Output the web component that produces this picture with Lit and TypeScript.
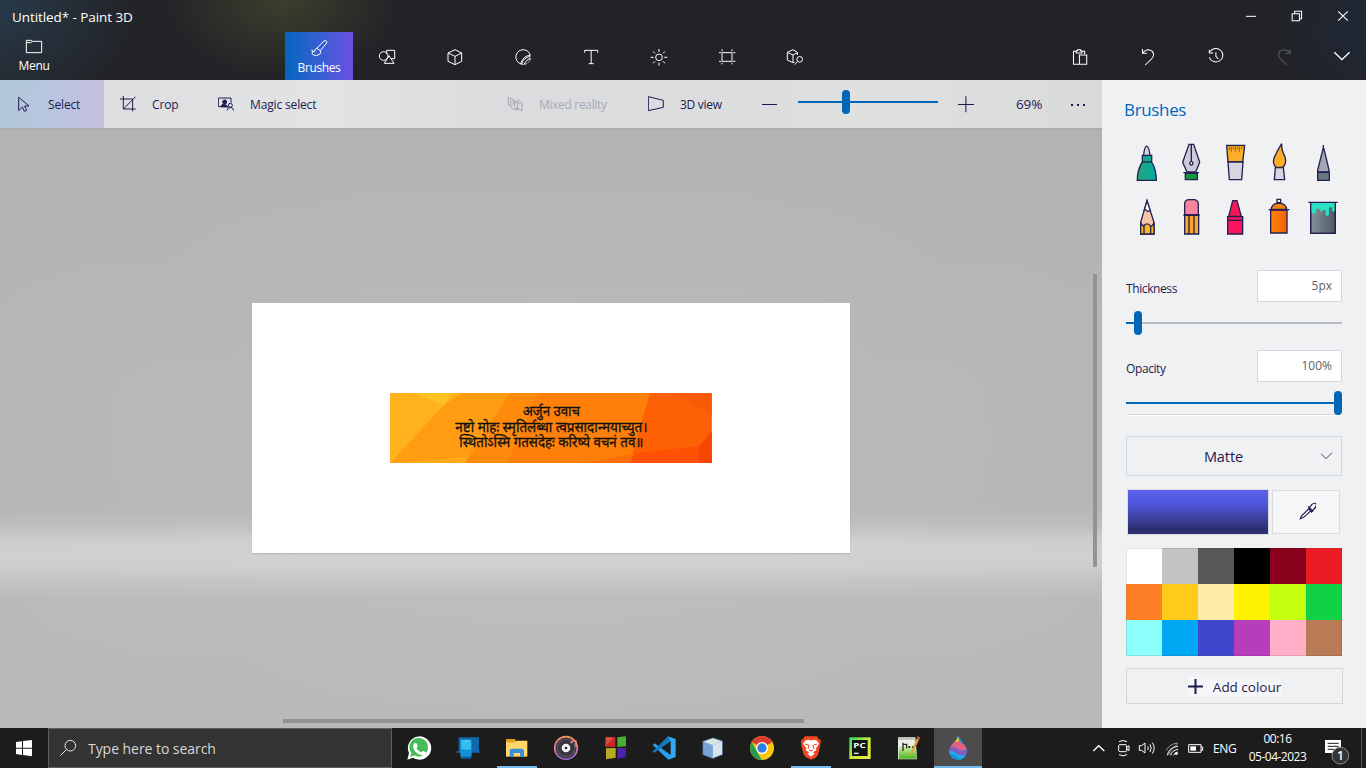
import { LitElement, html, svg, css } from "lit";
import { customElement } from "lit/decorators.js";
import { styleMap } from "lit/directives/style-map.js";

// Icon artwork is drawn on a grid of three units per pixel.
const art = (x: number, y: number, w: number, h: number, body: unknown, cls = "") => html`
  <svg class=${cls} width=${w} height=${h} viewBox="${x} ${y} ${w * 3} ${h * 3}">${body}</svg>`;

// Right-hand controls use a slightly narrower horizontal grid.
const wide = (body: unknown) => svg`<g transform="scale(1.0446 1)">${body}</g>`;

const tools = [
  svg`<circle cx="101" cy="78" r="13"/><path d="M110 72V61H134V86H124M103 100H132L117 77Z"/>`,
  svg`<path d="M315 59L335 69V94L315 104L294 94V69ZM294 69L315 79L335 69M315 79V104"/>`,
  svg`<path d="M521 103A22 22 0 1 1 541 76Q520 76 512 102M515 101Q519 84 541 79M522 103Q527 90 542 84"/><path d="M524 103Q537 100 542 85" stroke-dasharray="6 4"/>`,
  svg`<path d="M704 68V61H743V68M723.5 61V101M716 101H731"/>`,
  svg`<circle cx="927" cy="82" r="10"/><path d="M927 57V66M927 98V107M902 82H911M943 82H952M909 64L915 70M939 94L945 100M945 64L939 70M915 94L909 100"/>`,
  svg`<path d="M1116 68H1146V94H1116ZM1107 68H1113M1149 68H1156M1107 94H1113M1149 94H1156M1116 58V64M1146 58V64M1116 98V103M1146 98V103"/>`,
  svg`<path d="M1342 75V67L1329 59L1312 67V90L1329 98L1334 96M1312 67L1329 75L1342 68M1329 75V98M1334 104L1342 95"/><circle cx="1349" cy="88" r="8.5"/>`,
];

const actions = [
  svg`<path d="M744 193H728V154H736M750 154H760V162M736 159V152H740V149H748V152H752V159ZM745 165H766V193H745Z"/>`,
  svg`<path d="M926 147V160H939M926 160Q933 149 944 149Q958 151 958 165Q957 171 952 177L934 195"/>`,
  svg`<path d="M1120 155A20 20 0 1 1 1118 172M1118 149V159H1129M1137 157V169L1144 177"/>`,
  svg`<path d="M1350 147V160H1337M1350 160Q1343 149 1332 149Q1317 151 1317 165Q1318 171 1323 177L1341 195"/>`,
];

const brushes = [
  svg`<path d="M131 75Q133 51 140 48Q147 51 150 75" fill="#d6d5df"/><path d="M127 76H155V96Q169 118 169 151H112Q112 118 127 96Z" fill="url(#teal)"/><path d="M127 96H155"/>`,
  svg`<path d="M267 43H281L299 97L287 126H261L248 97Z" fill="#cbcbda"/><path d="M274 44V94M250 128H297"/><circle cx="274" cy="100" r="5" fill="#fff"/><path d="M256 130H292V149H256Z" fill="#109a40"/>`,
  svg`<path d="M380 46H434L428 96H384Z" fill="#fbae27"/><path d="M384 96H429L425 149H388Z" fill="#d7d6e0"/><path d="M388 49V60M394 49V66M400 49V58M406 49V65M412 49V60M418 49V67M425 49V58" stroke-width="1.6"/>`,
  svg`<path d="M545 41Q544 62 555 80Q561 102 548 112H528Q517 102 522 84Q530 66 545 41Z" fill="#fbae27"/><path d="M526 113H550L554 149H523Z" fill="#d7d6e0"/>`,
  svg`<path d="M669 57H672L687 120V126H653V120Z" fill="#a5a6b4"/><path d="M670 45V59"/><path d="M653 127H688V151H653Z" fill="#697683"/>`,
  svg`<path d="M141 212L162 277V312H122V277Z" fill="#f6c5a8"/><path d="M141 212L133 240Q138 237 142 244L151 242Z" fill="#fff"/><path d="M122 312V278Q129 292 134 285Q142 278 149 286Q156 293 162 278V312Z" fill="#fbb81f"/><path d="M132 288V312M152 288V312"/>`,
  svg`<path d="M254 255V221Q255 209 267 209H283Q295 211 295 222V255Z" fill="#f5869e"/><path d="M254 256H296V312H254Z" fill="#fba72b"/><path d="M267 256V312M282 256V312M250 255H299"/>`,
  svg`<path d="M398 212H411L424 259H386Z" fill="#f51858"/><path d="M383 260H428V312H383Z" fill="#fb155e"/><path d="M384 271H428"/>`,
  svg`<path d="M513 238Q516 223 530 220H543Q558 223 560 238Z" fill="#f68212"/><path d="M531 208H542V218H531Z" fill="#f0f1f3"/><path d="M512 240H561V309H512Z" fill="url(#orange)"/><path d="M506 239H568"/>`,
  svg`<path d="M632 218H706V310H632Z" fill="url(#slate)"/><path d="M633 218H705V242Q700 248 696 242V235Q691 228 687 234V254Q682 262 677 254V242Q672 236 668 242Q664 250 660 240Q655 233 651 237Q647 242 647 249Q641 254 636 248L633 244Z" fill="#2be0c2" stroke="none"/><path d="M632 218V310H706V218M625 217H713"/>`,
];

const apps = [
  svg`<path d="M52 104L57 84A35 35 0 1 1 69 98Z" fill="#fff"/><path d="M60 97L64 84A28 28 0 1 1 72 91Z" fill="#43bd55"/><path d="M75 53Q81 52 83 65L79 70Q85 79 94 82L99 77L108 82Q107 92 98 92Q72 87 69 64Q70 55 75 53Z" fill="#fff"/>`,
  svg`<path d="M206 37H267V79H270V83H199V79H206Z" fill="#1266aa"/><path d="M212 44H244V95H212Z" fill="#30bdee"/><path d="M212 74H244V93H212Z" fill="#1590d7"/><path d="M213 95H243V101H213Z" fill="#0864ad"/><path d="M225 48H234" stroke="#d3f5ff" stroke-width="2"/>`,
  svg`<path d="M348 42H374L379 48H411V95H348Z" fill="#dda018"/><path d="M348 52H376L380 47H412V94H348Z" fill="#ffd667"/><path d="M359 96V76Q359 71 365 71H397Q402 72 402 77V96H390V84H371V96Z" fill="#398fdc"/>`,
  svg`<circle cx="528" cy="69" r="34" fill="#383541" stroke="url(#groove)" stroke-width="5"/><circle cx="528" cy="69" r="26" stroke="#57515c" stroke-width="4"/><circle cx="528" cy="69" r="13" fill="#f4f4f4"/><circle cx="528" cy="69" r="4" fill="#232327"/><path d="M542 54Q550 43 558 49V66" stroke="#f08172" stroke-width="5"/>`,
  svg`<path d="M646 35L676 37V66L645 65Z" fill="#cf2721"/><path d="M682 37L708 34V64L682 66Z" fill="#49ae31"/><path d="M648 70L677 69V98L648 103Z" fill="#b5ae22"/><path d="M682 69H708L706 97L682 101Z" fill="#4e22ad"/><path d="M648 37L673 38L649 59Z" fill="#ed7770" opacity=".5"/>`,
  svg`<path d="M788 60L794 55L843 91L835 104Z" fill="#28a2ec"/><path d="M787 80L834 34L843 48L793 83Z" fill="#147ac0"/><path d="M834 34L857 42V96L835 104L842 88V49Z" fill="#30a9f2"/>`,
  svg`<path d="M69 38L98 48V89L68 101L38 89V49Z" fill="#9ebbd9"/><path d="M39 49L69 39L98 48L69 60Z" fill="#d6e6df"/><path d="M39 50L68 61V100L39 88Z" fill="#77a2d4"/><path d="M69 61L97 50V88L69 99Z" fill="#d7e4ed"/><path d="M69 38L98 48V89L68 101L38 89V49Z" stroke="#293d65" stroke-width="2"/>`,
  svg`<circle cx="216" cy="69" r="36" fill="#fbc713"/><path d="M216 69L185 51A36 36 0 0 1 247 51Z" fill="#de3b30"/><path d="M185 51L203 83L215 105A36 36 0 0 1 185 51Z" fill="#229b51"/><circle cx="216" cy="69" r="18" fill="#fff"/><circle cx="216" cy="69" r="14" fill="#317ee2"/>`,
  svg`<path d="M344 34H381L386 42L393 46L391 59L384 91L376 99L363 104L348 97L341 89L333 58V46L340 41Z" fill="#f24521"/><path d="M347 46L358 44L363 47L369 44L379 46L387 56L378 70L379 76L369 82L374 86L363 95L352 86L358 82L347 76L349 70L339 56Z" fill="#fff"/><path d="M345 57L357 61L354 72M381 57L369 61L372 72M357 75L363 78L369 75" stroke="#f24521" stroke-width="3"/>`,
  svg`<rect x="478" y="37" width="64" height="65" fill="url(#pyc)"/><rect x="486" y="45" width="47" height="48" fill="#101611"/><text x="490" y="68" font-size="22" font-weight="700" fill="#fff" textLength="37" lengthAdjust="spacingAndGlyphs">PC</text><path d="M492 85H506" stroke="#e5e5e5" stroke-width="4"/>`,
  svg`<path d="M624 37H676L681 103H624Z" fill="#edf0e7"/><path d="M626 65L678 60L680 101H626Z" fill="url(#npp)"/><path d="M626 42H675" stroke="#768774" stroke-width="5" stroke-dasharray="3 3"/><path d="M639 53V78M639 58H650V70M655 66H661M666 66H672M658 63V69" stroke="#252b22" stroke-width="4"/><path d="M659 92L663 80L683 34L690 38L668 84Z" fill="#e4a238"/><path d="M683 34L690 38L687 45L680 41Z" fill="#b6503e"/>`,
  svg`<path d="M805 33Q815 47 821 57Q832 67 831 80Q827 104 803 105Q781 104 777 82Q776 69 791 54Q799 46 805 33Z" fill="#218ed8"/><path d="M804 33L808 54L826 63Q813 60 800 58L790 55Q801 47 804 33Z" fill="#fec716"/><path d="M791 53Q799 47 812 52Q825 58 830 73Q817 82 803 71Q791 64 780 68Q783 60 791 53Z" fill="#e65f85"/><path d="M780 67Q794 62 803 72Q818 82 831 74Q832 85 827 89Q811 94 799 84Q789 77 777 78Z" fill="#845dc1"/><path d="M777 78Q789 77 799 85Q810 94 827 89Q818 102 806 104Q804 91 777 85Z" fill="#20abe5"/>`,
];

const tray = [
  svg`<path d="M40 78L56 62L73 78" stroke-width="4"/>`,
  svg`<path d="M119 59H138Q140 60 140 62V78Q139 80 137 80H120Q116 79 116 77V62Q116 59 119 59ZM140 67L147 62V77L140 72ZM117 50Q129 43 141 50M117 89Q129 96 141 89"/>`,
  svg`<path d="M178 62H185L195 54V84L185 76H178ZM203 64Q207 69 203 75M210 58Q217 69 210 81M217 53Q228 69 217 86"/>`,
  svg`<path d="M266 90Q270 75 294 55M258 77Q268 57 293 54" opacity=".55"/><path d="M262 91Q266 67 294 64M272 91Q275 76 294 73M281 91Q283 83 294 81"/><circle cx="289" cy="86" r="4" fill="#fff" stroke="none"/>`,
  svg`<path d="M326 59H363V82H326ZM363 66H368V76H363"/><path d="M331 64H348V77H331Z" fill="#fff" stroke="none"/>`,
];

const palette = [
  "#ffffff", "#c3c3c3", "#585858", "#000000", "#88001b", "#ec1c24",
  "#ff7f27", "#ffca18", "#fdeca6", "#fff200", "#c4ff0e", "#10d245",
  "#8cfffb", "#00a8f3", "#3f48cc", "#b83dba", "#ffaec8", "#b97a56",
];

@customElement("app-root")
export class AppRoot extends LitElement {
  static styles = css`
    * { box-sizing: border-box; }
    :host { display: flex; flex-direction: column; width: 1366px; height: 768px; overflow: hidden; font-family: "Open Sans", "Noto Sans", sans-serif; font-size: 12px; color: #1f1b50; }
    svg { display: block; flex: none; fill: none; }
    span { white-space: nowrap; }
    .head { height: 80px; color: #fff; background:
      radial-gradient(ellipse 150px 100px at 282px 0, rgba(76,76,48,.65), transparent 80%),
      radial-gradient(ellipse 140px 110px at 0 10px, rgba(42,62,80,.8), transparent),
      radial-gradient(ellipse 100px 100px at 1366px 30px, rgba(30,40,56,.8), transparent), #222327; }
    .line { stroke: #fff; stroke-width: 3; }
    .title { height: 32px; display: flex; align-items: center; padding-left: 12px; }
    .title span { flex: 1; font-size: 13.5px; letter-spacing: -.08px; padding-top: 2px; }
    .ribbon { height: 48px; display: flex; }
    .menu { width: 285px; }
    .cap { width: 68px; display: flex; flex-direction: column; align-items: center; font-size: 12px; line-height: 16px; }
    .brush { width: 68px; background: linear-gradient(90deg, #0466bd, #2c61ce 40%, #6a50e4); }
    .brush .cap { padding-top: 4px; letter-spacing: -.4px; }
    .menu .cap { padding-top: 2px; letter-spacing: -.25px; }
    .grow { flex: 1; }
    .dim { opacity: .25; }
    .main { height: 648px; display: flex; }
    .stage { width: 1102px; display: flex; flex-direction: column; }
    .bar { height: 48px; display: flex; align-items: center; background: linear-gradient(90deg, #dcddde, #e1e3e4 30%, #dadcdd 45%, #dcddde 70%, #dfe1e0 78%, #d9dbda); }
    .item { height: 48px; display: flex; align-items: center; padding-left: 16px; gap: 16px; width: 98px; letter-spacing: -.15px; }
    .item svg { stroke: #1f1b50; stroke-width: 3; }
    .item span { padding-top: 1px; }
    .item.select { width: 104px; background: linear-gradient(100deg, #afc8d6, #b9c5df 50%, #c7bfe0); }
    .item.magic { width: 289px; }
    .item.mixed { width: 141px; opacity: .28; letter-spacing: -.33px; }
    .item.view { width: 114px; letter-spacing: -.3px; }
    .ink { stroke: #1f1b50; stroke-width: 3; }
    .zoomline { margin: 0 4px; width: 140px; height: 24px; position: relative; top: -2px; display: flex; align-items: center; }
    .rail { height: 2px; width: 100%; background: #0066b8; }
    .thumb { position: absolute; width: 8px; height: 24px; border-radius: 4px; background: #0066b8; top: 0; }
    .zoomline .thumb { left: 44px; }
    .pct { width: 63px; padding-left: 25px; border: solid rgba(205,208,222,.35); border-width: 0 1px; height: 48px; line-height: 49px; font-size: 13.5px; letter-spacing: -.1px; }
    .dots { width: 49px; display: flex; justify-content: center; gap: 4px; padding-top: 1px; }
    .dots i { width: 2px; height: 2px; background: #1f1b50; }
    .space { position: relative; height: 600px; padding-top: 175px; display: flex; justify-content: center; align-items: flex-start;
      background: radial-gradient(ellipse 650px 420px at 551px 310px, rgba(255,255,255,.07), transparent),
      linear-gradient(#a9a9a9, #b2b4b3 3px, #b2b4b3 40px, #b5b7b6 250px, #b5b7b6 380px, #bcbebd 397px, #cbcdcc 411px, #cfd1d0 425px, #cdcfce 438px, #c3c5c4 452px, #b9bbba 472px, #b7b9b8 600px); }
    .sheet { width: 598px; height: 250px; background: #fff; display: flex; justify-content: center; align-items: center; box-shadow: 0 1px 1px rgba(110,120,120,.25); }
    .vbar { position: absolute; left: 1093px; top: 146px; width: 4px; height: 293px; background: #929393; }
    .hbar { position: absolute; left: 283px; top: 591px; width: 521px; height: 4px; background: #929393; }
    .verse { font-family: "Noto Sans Devanagari", "Noto Sans", "Lohit Devanagari", sans-serif; font-size: 41px; fill: #111; stroke: #111; stroke-width: .9; text-anchor: middle; }
    .panel { width: 264px; background: #f0f1f3; padding: 0 24px; }
    .panel h1 { margin: 0 0 0 -2px; height: 60px; padding-top: 18px; line-height: 24px; font-weight: 400; font-size: 17px; letter-spacing: -.35px; color: #0067bd; }
    .grid { display: grid; grid-template-columns: repeat(5, 44px); row-gap: 11px; width: 220px; margin-left: -1px; stroke: #252052; stroke-width: 4; }
    .setting { display: flex; justify-content: space-between; height: 32px; }
    .setting.first { margin-top: 31px; }
    .setting label { padding-top: 10px; line-height: 18px; letter-spacing: -.4px; }
    .field { width: 85px; height: 32px; border: 1px solid #d2d7e1; background: #fff; color: #616161; text-align: right; padding-right: 9px; line-height: 30px; font-size: 12px; }
    .range { height: 24px; margin: 9px 0 15px; position: relative; display: flex; align-items: center; }
    .range .rail { background: #b9bcc0; }
    .range .rail.full { background: #0066b8; }
    .fill { position: absolute; height: 2px; left: 0; top: 11px; background: #0066b8; }
    .range.last { margin-bottom: 0; }
    .rule { height: 2px; margin: -1px 2px 20px; border-top: 1px solid #d5d8dc; background: #fff; }
    .drop { height: 40px; border: 1px solid #d2d8e2; display: flex; align-items: center; justify-content: flex-end; }
    .drop span { font-size: 14.5px; margin-right: 78px; letter-spacing: -.1px; }
    .colour { display: flex; gap: 3px; margin: 13px 0 13px 1px; align-items: center; }
    .swatch { width: 142px; height: 46px; border: 1px solid #dcdcdf; background: linear-gradient(#5b60ee, #5157dd 30%, #3c419d 66%, #292d6c 90%, #303374); }
    .pick { width: 68px; height: 44px; background: #f5f6f7; border: 1px solid #dbdcdf; display: flex; justify-content: center; align-items: center; }
    .palette { display: grid; grid-template-columns: repeat(6, 36px); grid-auto-rows: 36px; position: relative; }
    .palette::after { content: ""; position: absolute; inset: 0; border: 1px solid rgba(60,60,60,.14); }
    .add { margin-top: 12px; width: 217px; height: 36px; border: 1px solid #d5d7da; display: flex; align-items: center; justify-content: center; }
    .tag { display: flex; align-items: center; gap: 10px; height: 19px; background: #f5f6f7; font-size: 13.5px; letter-spacing: -.02px; }
    .tag span { padding-top: 2px; }
    .task { height: 40px; background: #1c1c1c; display: flex; align-items: center; color: #fff; }
    .search { width: 344px; height: 40px; background: #333; border: 1px solid #5e5e5e; display: flex; align-items: center; gap: 11px; padding-left: 10px; color: #d7d7d7; font-size: 14px; letter-spacing: -.05px; }
    .apps { display: flex; gap: 1px; margin-left: 3px; }
    .app { width: 48px; height: 40px; position: relative; }
    .app.active { background: #4c4c4c; }
    .app.open::after, .app.active::after { content: ""; position: absolute; left: 4px; right: 4px; bottom: 0; height: 2px; background: #76b9ed; }
    .app.active::after { left: 0; right: 0; }
    .tray { display: flex; margin-left: 105px; stroke: #fff; stroke-width: 3; }
    .lang { width: 35px; padding-left: 6px; letter-spacing: -.4px; }
    .clock { width: 71px; text-align: center; line-height: 18px; letter-spacing: -.5px; }
    .note { margin-left: 5px; }
  `;

  render() {
    return html`
      <div class="head">
        <div class="title">
          <span>Untitled* - Paint 3D</span>
          ${art(1224, 0, 46, 32, wide(svg`<path d="M1223 49H1252"/>`), "line")}
          ${art(1362, 0, 46, 32, wide(svg`<path d="M1356 41H1377V62H1356ZM1363 41V34H1383V56H1377"/>`), "line")}
          ${art(1500, 0, 46, 32, wide(svg`<path d="M1488 34L1516 62M1516 34L1488 62"/>`), "line")}
        </div>
        <div class="ribbon">
          <div class="menu"><div class="cap">${art(66, 102, 24, 24, svg`<path d="M79 121V158H125V124H97L94 121ZM79 128H92L97 124"/>`, "line")}<span>Menu</span></div></div>
          <div class="brush"><div class="cap">${art(921, 108, 24, 24, svg`<path d="M950 145L972 123Q982 119 980 129L961 152M950 145L961 152M950 145Q943 147 944 155L937 154Q935 162 940 165Q950 170 960 162Q965 157 961 152M934 151H939"/>`, "line")}<span>Brushes</span></div></div>
          ${tools.map((t, i) => art(9 + 204 * i, 6, 68, 48, t, "line"))}
          <div class="grow"></div>
          ${actions.map((t, i) => art(678 + 204 * i, 96, 68, 48, wide(t), i === 3 ? "line dim" : "line"))}
          ${art(1494, 96, 48, 48, wide(svg`<path d="M1477 157L1499 179L1521 157" stroke-width="4"/>`), "line")}
        </div>
      </div>
      <div class="main">
        <div class="stage">
          <div class="bar">
            <div class="item select">${art(48, 285, 16, 17, svg`<path d="M56 289V329L67 318L73 331L80 328L74 315H87Z"/>`)}<span>Select</span></div>
            <div class="item">${art(360, 285, 16, 17, svg`<path d="M370 285V324H407M360 294H398V331M370 324L407 287"/>`)}<span>Crop</span></div>
            <div class="item magic">${art(654, 285, 16, 17, svg`<path d="M681 317H655V291H693V305"/><circle cx="674" cy="303" r="6" fill="#1f1b50"/><path d="M663 317Q665 309 673 309L685 318Z" fill="#1f1b50"/><circle cx="691" cy="313" r="6"/><path d="M681 329Q684 319 691 319Q699 319 701 329"/>`)}<span>Magic select</span></div>
            <div class="item mixed">${art(471, 197, 16, 17, svg`<path d="M482 227L475 223V201L493 210V215M503 212V209L516 217V242L502 234"/><path d="M482 213L493 213L503 220V238L493 238L482 231ZM493 213V229L503 238M487 222L499 214L510 221"/>`)}<span>Mixed reality</span></div>
            <div class="item view">${art(894, 197, 16, 17, svg`<path d="M895 199V241L940 231V210Z"/>`)}<span>3D view</span></div>
            ${art(1188, 216, 48, 5, svg`<path d="M1236 223.5H1281"/>`, "ink")}
            <div class="zoomline"><div class="rail"></div><div class="thumb"></div></div>
            ${art(366, 285, 48, 20, wide(svg`<path d="M396 316.5H442M419 292V340"/>`), "ink")}
            <div class="pct">69%</div>
            <div class="dots"><i></i><i></i><i></i></div>
          </div>
          <div class="space">
            <div class="sheet">
              <svg width="322" height="70" viewBox="30 24 966 210">
                <path d="M31 24H995V234H31Z" fill="#ff8008"/>
                <path d="M31 24H390L270 216L256 234H31Z" fill="#ff9c12"/>
                <path d="M390 24H475L382 234H256Z" fill="#ff8a0c"/>
                <path d="M31 24H245L190 62L31 234Z" fill="#ffb21b"/>
                <path d="M100 24H215L190 62Z" fill="#ffc121"/>
                <path d="M31 234L265 216L256 234Z" fill="#ffa91c"/>
                <path d="M810 24H995V234H748Z" fill="#fd6005"/>
                <path d="M880 24H995V90Z" fill="#f95a06"/>
                <path d="M765 205L958 184L995 140V234H748Z" fill="#ff5103"/>
                <path d="M958 184L995 140V234H958Z" fill="#f94503"/>
                <path d="M625 234L765 205L748 234Z" fill="#ff6d05"/>
                <g class="verse">
                  <text x="514" y="93" textLength="172" lengthAdjust="spacingAndGlyphs">अर्जुन उवाच</text>
                  <text x="514" y="140" textLength="576" lengthAdjust="spacingAndGlyphs">नष्टो मोहः स्मृतिर्लब्धा त्वप्रसादान्मयाच्युत।</text>
                  <text x="514" y="187" textLength="552" lengthAdjust="spacingAndGlyphs">स्थितोऽस्मि गतसंदेहः करिष्ये वचनं तव॥</text>
                </g>
              </svg>
            </div>
            <div class="vbar"></div><div class="hbar"></div>
          </div>
        </div>
        <div class="panel">
          <h1>Brushes</h1>
          <div class="grid">${brushes.map((b, i) => html`
            <svg width="44" height="44" viewBox="${75 + 132 * (i % 5)} ${i < 5 ? 30 : 195} 132 132">
              <defs>
                <linearGradient id="teal"><stop stop-color="#2aa67a"/><stop offset="1" stop-color="#00a9a5"/></linearGradient>
                <linearGradient id="orange"><stop stop-color="#ff8500"/><stop offset="1" stop-color="#f35e07"/></linearGradient>
                <linearGradient id="slate"><stop stop-color="#86919c"/><stop offset="1" stop-color="#4d5962"/></linearGradient>
              </defs>${b}
            </svg>`)}</div>
          <div class="setting first"><label>Thickness</label><div class="field">5px</div></div>
          <div class="range"><div class="rail"></div><div class="fill" style=${styleMap({ width: "12px" })}></div><div class="thumb" style=${styleMap({ left: "8px" })}></div></div>
          <div class="setting"><label>Opacity</label><div class="field">100%</div></div>
          <div class="range last"><div class="rail full"></div><div class="thumb" style=${styleMap({ left: "208px" })}></div></div>
          <div class="rule"></div>
          <div class="drop"><span>Matte</span>${art(663, 90, 20, 12, svg`<path d="M660 98L678 116L696 98" stroke-width="2.5"/>`, "ink chev")}</div>
          <div class="colour"><div class="swatch"></div><div class="pick">${art(588, 246, 20, 20, svg`<path d="M626 266L635 254Q645 246 649 253Q650 260 642 267L635 276ZM624 259L640 274M627 266L604 288L601 296L611 292L634 271" stroke-width="3.5"/>`, "ink")}</div></div>
          <div class="palette">${palette.map((c) => html`<div style=${styleMap({ background: c })}></div>`)}</div>
          <div class="add"><div class="tag">${art(261, 417, 15, 15, svg`<path d="M261 439.5H306M283.5 417V462" stroke-width="6"/>`, "ink")}<span>Add colour</span></div></div>
        </div>
      </div>
      <div class="task">
        ${art(0, 39, 48, 40, svg`<path d="M48 81L66 79V98H48ZM69 78L96 75V98H69ZM48 101H66V120L48 117ZM69 101H96V124L69 120Z" fill="#fff"/>`)}
        <div class="search">${art(177, 72, 18, 18, svg`<circle cx="211" cy="92" r="16" stroke="#e8e8e8" stroke-width="3"/><path d="M200 103L181 122" stroke="#e8e8e8" stroke-width="3"/>`)}<span>Type here to search</span></div>
        <div class="apps">${apps.map((a, i) => html`<div class="app ${i === 2 || i === 8 ? "open" : i === 11 ? "active" : ""}">
          <svg width="48" height="40" viewBox="${i < 6 ? 15 + 147 * i : -3 + 147 * (i - 6)} 9 144 120">
            <defs>
              <linearGradient id="groove" x2="0" y2="1"><stop stop-color="#f9945c"/><stop offset=".5" stop-color="#d7809b"/><stop offset="1" stop-color="#9564c6"/></linearGradient>
              <linearGradient id="pyc" x2="1" y2="1"><stop stop-color="#22e46b"/><stop offset=".5" stop-color="#c8e83a"/><stop offset="1" stop-color="#f2ec45"/></linearGradient>
              <linearGradient id="npp" x2="0" y2="1"><stop stop-color="#e8f6bc"/><stop offset="1" stop-color="#47b51f"/></linearGradient>
            </defs>${a}
          </svg></div>`)}</div>
        <div class="tray">${tray.map((t, i) => art(21 + 72 * i, 9, 24, 40, t))}</div>
        <div class="lang">ENG</div>
        <div class="clock">00:16<br />05-04-2023</div>
        ${art(714, 9, 48, 40, svg`<path d="M735 45H783V84H770L757 93V84H735Z" fill="#fff"/><path d="M743 55H776M743 64H776M743 73H763" stroke="#1c1c1c" stroke-width="3"/><circle cx="781" cy="92" r="25" fill="#343434" stroke="#8d8d8d" stroke-width="3"/><text x="781" y="105" text-anchor="middle" font-size="36" font-weight="600" fill="#fff">1</text><path d="M845 9V129" stroke="#777" stroke-width="2"/>`, "note")}
      </div>`;
  }
}
